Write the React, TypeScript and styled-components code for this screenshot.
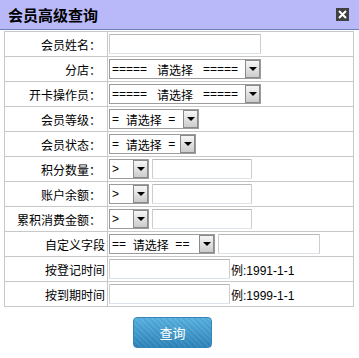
import styled, { createGlobalStyle } from "styled-components";

const GlobalStyle = createGlobalStyle`
    html, body {
        margin: 0;
        padding: 0;
        background: #ffffff;
    }
    body {
        font-family: "Liberation Sans", "Noto Sans CJK SC", sans-serif;
        font-size: 12px;
        color: #000;
    }
`;

const Page = styled.div`
    width: 359px;
    height: 358px;
    overflow: hidden;
`;

const Header = styled.div`
    height: 29px;
    background: #b9b9f9;
    border-bottom: 1px solid #6b7fbd;
    display: flex;
    align-items: center;
    justify-content: space-between;
    padding: 0 10px 0 8px;
`;

const Title = styled.h1`
    margin: 0;
    font-size: 15px;
    font-weight: bold;
    font-family: "Noto Sans CJK SC", sans-serif;
    color: #000;
`;

const CloseBox = styled.div`
    width: 13px;
    height: 13px;
    background: #404040;
    display: flex;
    align-items: center;
    justify-content: center;
`;

const Form = styled.div`
    margin: 1px 0 0 4px;
    width: 348px;
    border: 1px solid #c8c8c8;
    border-bottom: none;
`;

const Row = styled.div`
    display: grid;
    grid-template-columns: 103px 1fr;
    height: 24px;
    border-bottom: 1px solid #c8c8c8;
`;

const Label = styled.div<{ $pad: number }>`
    border-right: 1px solid #c8c8c8;
    display: flex;
    align-items: center;
    justify-content: flex-end;
    padding-right: ${(p) => p.$pad}px;
    font-family: "Noto Sans CJK SC", sans-serif;
    font-size: 12px;
    white-space: nowrap;
`;

const Cell = styled.div`
    display: flex;
    align-items: center;
    gap: 3px;
    padding-left: 1px;
`;

const TextBox = styled.div<{ $w: number }>`
    width: ${(p) => p.$w}px;
    height: 20px;
    box-sizing: border-box;
    border: 1px solid #cdcdcd;
    border-top-color: #b8b8b8;
    border-bottom-color: #dde3ea;
    border-radius: 1px;
    background: #fff;
`;

const SelectBox = styled.div<{ $w: number }>`
    width: ${(p) => p.$w}px;
    height: 20px;
    box-sizing: border-box;
    border: 1px solid #9c9c9c;
    background: #fff;
    display: flex;
    align-items: center;
    justify-content: space-between;
    padding-left: 2px;
    white-space: nowrap;
    overflow: hidden;
`;

const SelectText = styled.span`
    font-family: "Noto Sans CJK SC", sans-serif;
    font-size: 12px;
    display: flex;
    align-items: center;
`;

const Eq = styled.span`
    font-family: "Liberation Sans", sans-serif;
    font-size: 12px;
    white-space: pre;
`;

const DropButton = styled.div`
    width: 15px;
    height: 18px;
    box-sizing: border-box;
    border: 1px solid #8a8a8a;
    background: linear-gradient(#f6f6f6, #cccccc);
    display: flex;
    align-items: center;
    justify-content: center;
    flex-shrink: 0;
`;

const Arrow = styled.div`
    width: 0;
    height: 0;
    border-left: 4px solid transparent;
    border-right: 4px solid transparent;
    border-top: 4px solid #000;
`;

const Hint = styled.span`
    margin-left: -2px;
    font-size: 12px;
`;

const Footer = styled.div`
    padding: 10px 0 0 133px;
`;

const SearchButton = styled.button`
    width: 79px;
    height: 31px;
    border: 1px solid #3584b5;
    border-radius: 4px;
    background: repeating-linear-gradient(45deg, rgba(255,255,255,0.05) 0 2px, rgba(0,0,0,0.03) 2px 4px),
        linear-gradient(#56b0df, #2d84ba);
    color: #fff;
    font-family: "Noto Sans CJK SC", sans-serif;
    font-size: 13px;
    cursor: pointer;
    padding: 0;
`;

const Select = ({ w, left, mid, right }: { w: number; left: string; mid?: string; right?: string }) => (
    <SelectBox $w={w}>
        <SelectText>
            <Eq>{left}</Eq>
            {mid}
            {right && <Eq>{right}</Eq>}
        </SelectText>
        <DropButton>
            <Arrow />
        </DropButton>
    </SelectBox>
);

const App = () => {
    return (
        <Page>
            <GlobalStyle />
            <Header>
                <Title>会员高级查询</Title>
                <CloseBox>
                    <svg width="9" height="9" viewBox="0 0 9 9">
                        <path d="M1 1L8 8M8 1L1 8" stroke="#fff" strokeWidth="2" />
                    </svg>
                </CloseBox>
            </Header>
            <Form>
                <Row>
                    <Label $pad={6}>会员姓名：</Label>
                    <Cell><TextBox $w={152} /></Cell>
                </Row>
                <Row>
                    <Label $pad={6}>分店：</Label>
                    <Cell><Select w={152} left="=====   " mid="请选择" right="   =====" /></Cell>
                </Row>
                <Row>
                    <Label $pad={6}>开卡操作员：</Label>
                    <Cell><Select w={152} left="=====   " mid="请选择" right="   =====" /></Cell>
                </Row>
                <Row>
                    <Label $pad={6}>会员等级：</Label>
                    <Cell><Select w={90} left="=  " mid="请选择" right="  =" /></Cell>
                </Row>
                <Row>
                    <Label $pad={6}>会员状态：</Label>
                    <Cell><Select w={87} left="=  " mid="请选择" right="  =" /></Cell>
                </Row>
                <Row>
                    <Label $pad={6}>积分数量：</Label>
                    <Cell><Select w={40} left=">" /><TextBox $w={100} /></Cell>
                </Row>
                <Row>
                    <Label $pad={6}>账户余额：</Label>
                    <Cell><Select w={40} left=">" /><TextBox $w={100} /></Cell>
                </Row>
                <Row>
                    <Label $pad={6}>累积消费金额：</Label>
                    <Cell><Select w={40} left=">" /><TextBox $w={100} /></Cell>
                </Row>
                <Row>
                    <Label $pad={2}>自定义字段</Label>
                    <Cell><Select w={106} left="==  " mid="请选择" right="  ==" /><TextBox $w={102} /></Cell>
                </Row>
                <Row>
                    <Label $pad={2}>按登记时间</Label>
                    <Cell><TextBox $w={121} /><Hint>例:1991-1-1</Hint></Cell>
                </Row>
                <Row>
                    <Label $pad={2}>按到期时间</Label>
                    <Cell><TextBox $w={121} /><Hint>例:1999-1-1</Hint></Cell>
                </Row>
            </Form>
            <Footer>
                <SearchButton>查询</SearchButton>
            </Footer>
        </Page>
    );
};

export default App;
